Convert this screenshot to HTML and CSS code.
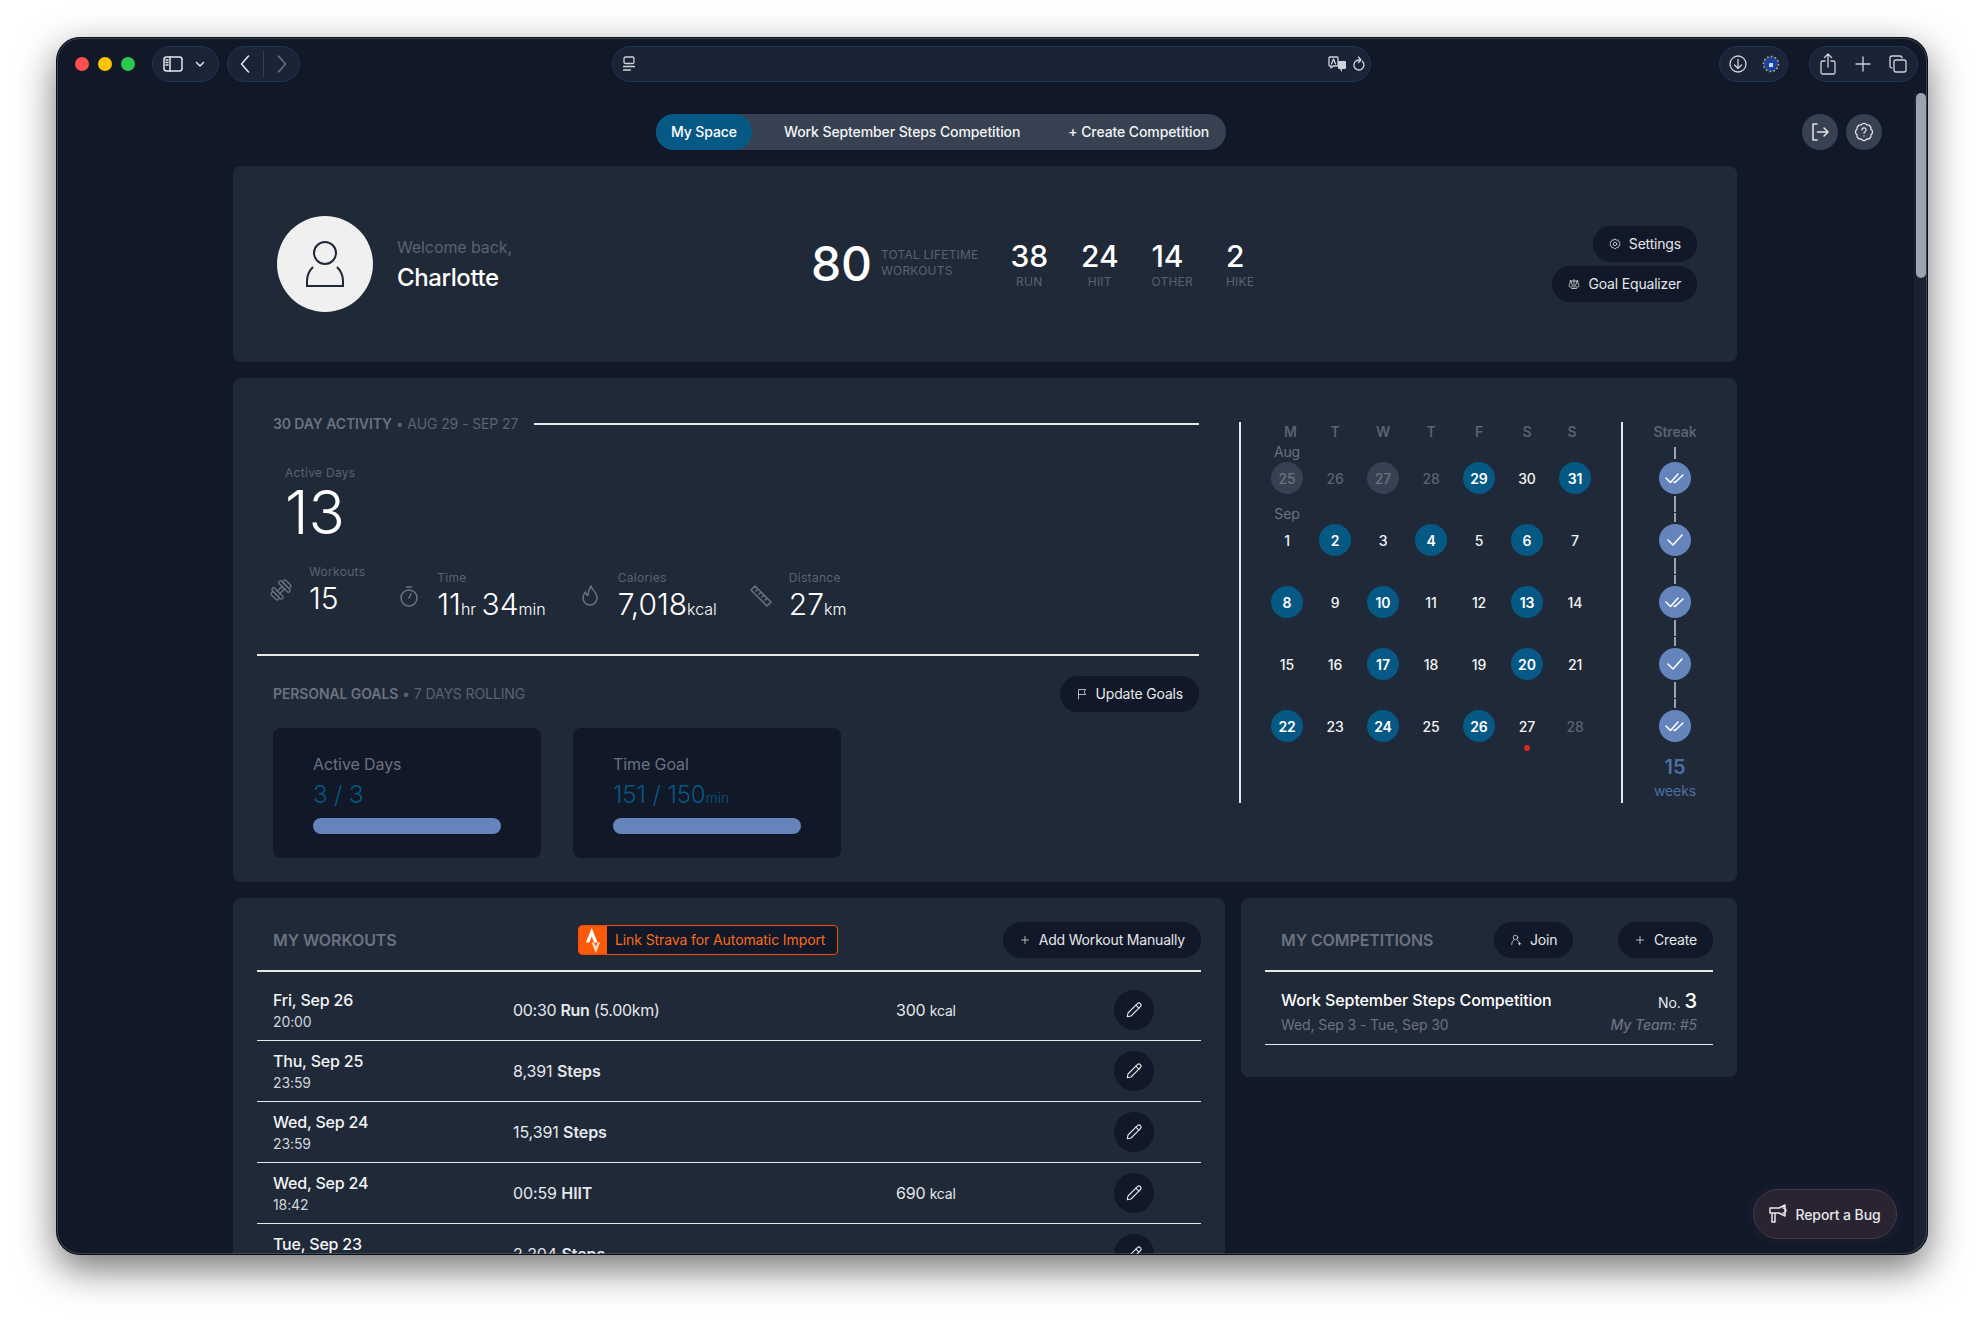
FILE: index.html
```html
<!DOCTYPE html>
<html lang="en">
<head>
<meta charset="utf-8">
<title>My Space</title>
<link rel="stylesheet" href="styles.css">
</head>
<body>
<div class="window">
  <header class="toolbar">
    <div class="lights"><span class="light red"></span><span class="light yellow"></span><span class="light green"></span></div>
    <div class="pill side">
      <svg width="20" height="16" viewBox="0 0 20 16" class="tb"><rect x="1" y="1" width="18" height="14" rx="2.5"/><path d="M7 1v14M3 4h2M3 6.5h2M3 9h2"/></svg>
      <svg width="10" height="7" viewBox="0 0 10 7" class="tb"><path d="M1.5 1.5 5 5l3.500-3.500"/></svg>
    </div>
    <div class="pill nav-pill">
      <svg width="10" height="18" viewBox="0 0 10 18" class="tb"><path d="M8.500 1 1.500 9l7 8"/></svg>
      <span class="nav-sep"></span>
      <svg width="10" height="18" viewBox="0 0 10 18" class="tb dim"><path d="M1.500 1l7 8-7 8"/></svg>
    </div>
    <div class="pill address">
      <svg width="12" height="16" viewBox="0 0 12 16" class="tb thin"><rect x="1" y="1" width="10" height="6.500" rx="1.500"/><path d="M.5 10.500h11M.5 14h7"/></svg>
      <span class="address-end">
        <svg width="19" height="16" viewBox="0 0 19 16" class="tb thin"><path d="M2 1h7a1 1 0 0 1 1 1v7a1 1 0 0 1-1 1H5l-2 2v-2H2a1 1 0 0 1-1-1V2a1 1 0 0 1 1-1z"/><path d="M3.500 8l2-5 2 5"/><rect class="solid" x="10" y="5" width="8" height="8" rx="1"/><path class="solid" d="M14 13v3l-2-3z"/></svg>
        <svg width="12" height="16" viewBox="0 0 12 16" class="tb thin"><path d="M9.500 5.500a5 5 0 1 1-3.500-1.500H7M5.500 1 8 4 5.500 6.500"/></svg>
      </span>
    </div>
    <div class="pill ext">
      <svg width="18" height="18" viewBox="0 0 18 18" class="tb thin"><circle cx="9" cy="9" r="8"/><path d="M9 4.500v9M5.500 10 9 13.500l3.500-3.500"/></svg>
      <svg width="18" height="18" viewBox="0 0 18 18"><circle cx="9" cy="9" r="8" fill="#1d3f9e"/><circle cx="9" cy="9" r="7.500" fill="none" stroke="#d8b92a" stroke-width="1.600" stroke-dasharray="1.400 2.500"/><rect x="7" y="8" width="4" height="4" rx=".6" fill="#c9d4f0"/></svg>
    </div>
    <div class="pill actions">
      <svg width="16" height="22" viewBox="0 0 16 22" class="tb thin"><path d="M5 8H2.500A1.500 1.500 0 0 0 1 9.500v10A1.500 1.500 0 0 0 2.500 21h11a1.500 1.500 0 0 0 1.500-1.500v-10A1.500 1.500 0 0 0 13.500 8H11M8 14V1M4.500 4.500 8 1l3.500 3.500"/></svg>
      <svg width="16" height="16" viewBox="0 0 16 16" class="tb thin"><path d="M8 1v14M1 8h14"/></svg>
      <svg width="18" height="18" viewBox="0 0 18 18" class="tb thin"><rect x="5" y="5" width="12" height="12" rx="2"/><path d="M3 13a2 2 0 0 1-2-2V3a2 2 0 0 1 2-2h8a2 2 0 0 1 2 2"/></svg>
    </div>
  </header>

  <div class="viewport">
    <main class="main">
      <div class="topnav">
        <nav class="tabs">
          <a class="tab active">My Space</a>
          <a class="tab second">Work September Steps Competition</a>
          <a class="tab third">+ Create Competition</a>
        </nav>
        <div class="round-btns">
          <button class="round"><svg width="20" height="20" viewBox="0 0 20 20" class="ico"><path d="M7 2H3v16h4M7.500 10H18M14 6l4 4-4 4"/></svg></button>
          <button class="round"><svg width="20" height="20" viewBox="0 0 24 24" class="ico"><path d="M15.440 3.700A4 4 0 0 1 20.300 8.560 4 4 0 0 1 20.300 15.440 4 4 0 0 1 15.440 20.300 4 4 0 0 1 8.560 20.300 4 4 0 0 1 3.700 15.440 4 4 0 0 1 3.700 8.560 4 4 0 0 1 8.560 3.700 4 4 0 0 1 15.440 3.700z"/><path d="M9.500 9.500a2.500 2.500 0 1 1 3.800 2.100c-.8.500-1.300 1-1.300 1.900M12 16.500v.3"/></svg></button>
        </div>
      </div>

      <section class="card profile">
        <div class="who">
          <div class="avatar"><svg width="40" height="60" viewBox="0 -2 40 60" class="avatar-ico"><ellipse cx="20" cy="17" rx="11" ry="11"/><path d="M8 31C4 35 2 40 2 45v5h36v-5c0-5-2-10-6-14"/></svg></div>
          <div class="greet">
            <div class="welcome">Welcome back,</div>
            <div class="name">Charlotte</div>
          </div>
        </div>
        <div class="stats">
          <div class="total">80</div>
          <div class="total-label">TOTAL LIFETIME<br>WORKOUTS</div>
          <div class="stat center"><b>38</b><span>RUN</span></div>
          <div class="stat center"><b>24</b><span>HIIT</span></div>
          <div class="stat"><b>14</b><span>OTHER</span></div>
          <div class="stat"><b>2</b><span>HIKE</span></div>
        </div>
        <div class="profile-btns">
          <button class="btn"><svg width="12" height="12" viewBox="0 0 24 24" class="ico"><path d="M12 2l2.500 2.300 3.300-.6 1.100 3.200 3.100 1.500L21 11.500l1 3-3 1.700-.8 3.300-3.400-.1L12 22l-2.800-2.600-3.400.1-.8-3.300-3-1.700 1-3-1-3.100 3.100-1.500 1.100-3.200 3.300.6z"/><circle cx="12" cy="12" r="3.500"/></svg>Settings</button>
          <button class="btn"><svg width="12" height="12" viewBox="0 0 24 24" class="ico"><path d="M12 3v18M7 21h10M4 6h16M5.500 6 2 15a3.500 3.500 0 0 0 7 0L5.500 6zM18.500 6 15 15a3.500 3.500 0 0 0 7 0l-3.500-9z"/></svg>Goal Equalizer</button>
        </div>
      </section>

      <section class="card activity">
        <div class="act-left">
          <div class="sec-head">
            <div class="sec-title"><b>30 DAY ACTIVITY</b> • AUG 29 - SEP 27</div>
            <span class="rule"></span>
          </div>
          <div class="hero">
            <div class="small-label">Active Days</div>
            <div class="hero-num">13</div>
          </div>
          <div class="metrics">
            <div class="metric">
              <svg width="24" height="24" viewBox="2 2 20 20" class="ico gray thin"><g transform="rotate(-45 12 12)"><path d="M9 10.500h6M9 13.500h6"/><rect x="6.500" y="6" width="2.800" height="12" rx="1.300"/><rect x="14.700" y="6" width="2.800" height="12" rx="1.300"/><rect x="3.500" y="8" width="3" height="8" rx="1.300"/><rect x="17.500" y="8" width="3" height="8" rx="1.300"/></g></svg>
              <div><div class="small-label">Workouts</div><div class="val">15</div></div>
            </div>
            <div class="metric low">
              <svg width="24" height="24" viewBox="0 0 24 24" class="ico gray"><circle cx="12" cy="14" r="8"/><path d="M12 14l2-4M9.500 3h5"/></svg>
              <div><div class="small-label">Time</div><div class="val">11<small>hr</small> 34<small>min</small></div></div>
            </div>
            <div class="metric low">
              <svg width="24" height="24" viewBox="0 0 24 24" class="ico gray"><path d="M13 2c.5 3.500 6 6 6 12a7 7 0 0 1-14 0c0-2.500 1-4.500 2.500-6 .3 2 1 3 2.500 3.500C10 8 11 5 13 2z"/></svg>
              <div><div class="small-label">Calories</div><div class="val">7,018<small>kcal</small></div></div>
            </div>
            <div class="metric low">
              <svg width="24" height="24" viewBox="0 0 24 24" class="ico gray"><path d="M6 2 22 18l-4 4L2 6zM7 7l2-2M10 10l2-2M13 13l2-2M16 16l2-2"/></svg>
              <div><div class="small-label">Distance</div><div class="val">27<small>km</small></div></div>
            </div>
          </div>
          <div class="rule-full"></div>
          <div class="goal-head">
            <div class="sec-title"><b>PERSONAL GOALS</b> • 7 DAYS ROLLING</div>
            <button class="btn"><svg width="12" height="12" viewBox="0 0 24 24" class="ico"><path d="M5 22V3h14l-2.500 5 2.500 5H5"/></svg>Update Goals</button>
          </div>
          <div class="goals">
            <div class="goal">
              <div class="goal-label">Active Days</div>
              <div class="goal-val">3 / 3</div>
              <div class="bar"></div>
            </div>
            <div class="goal">
              <div class="goal-label">Time Goal</div>
              <div class="goal-val">151 / 150<small>min</small></div>
              <div class="bar"></div>
            </div>
          </div>
        </div>

        <div class="calendar">
          <div class="cal-head"><span>M</span><span>T</span><span>W</span><span>T</span><span>F</span><span>S</span><span>S</span></div>
          <div class="cal-grid">
            <div class="cell"><em>Aug</em><span class="d past">25</span></div>
            <div class="cell"><span class="d muted">26</span></div>
            <div class="cell"><span class="d past">27</span></div>
            <div class="cell"><span class="d muted">28</span></div>
            <div class="cell"><span class="d on">29</span></div>
            <div class="cell"><span class="d">30</span></div>
            <div class="cell"><span class="d on">31</span></div>
            <div class="cell"><em>Sep</em><span class="d">1</span></div>
            <div class="cell"><span class="d on">2</span></div>
            <div class="cell"><span class="d">3</span></div>
            <div class="cell"><span class="d on">4</span></div>
            <div class="cell"><span class="d">5</span></div>
            <div class="cell"><span class="d on">6</span></div>
            <div class="cell"><span class="d">7</span></div>
            <div class="cell"><span class="d on">8</span></div>
            <div class="cell"><span class="d">9</span></div>
            <div class="cell"><span class="d on">10</span></div>
            <div class="cell"><span class="d">11</span></div>
            <div class="cell"><span class="d">12</span></div>
            <div class="cell"><span class="d on">13</span></div>
            <div class="cell"><span class="d">14</span></div>
            <div class="cell"><span class="d">15</span></div>
            <div class="cell"><span class="d">16</span></div>
            <div class="cell"><span class="d on">17</span></div>
            <div class="cell"><span class="d">18</span></div>
            <div class="cell"><span class="d">19</span></div>
            <div class="cell"><span class="d on">20</span></div>
            <div class="cell"><span class="d">21</span></div>
            <div class="cell"><span class="d on">22</span></div>
            <div class="cell"><span class="d">23</span></div>
            <div class="cell"><span class="d on">24</span></div>
            <div class="cell"><span class="d">25</span></div>
            <div class="cell"><span class="d on">26</span></div>
            <div class="cell"><span class="d today">27</span></div>
            <div class="cell"><span class="d muted">28</span></div>
          </div>
        </div>

        <div class="streak">
          <div class="streak-title">Streak</div>
          <span class="stub"></span>
          <span class="wk"><svg width="20" height="12" viewBox="0 0 20 12" class="chk"><path d="M1 6l4.500 4.500L13 2M9 10l1 .5L18 3"/></svg></span>
          <span class="link"></span>
          <span class="wk"><svg width="18" height="14" viewBox="0 0 18 14" class="chk"><path d="M2 7l5 5L16 2"/></svg></span>
          <span class="link"></span>
          <span class="wk"><svg width="20" height="12" viewBox="0 0 20 12" class="chk"><path d="M1 6l4.500 4.500L13 2M9 10l1 .5L18 3"/></svg></span>
          <span class="link"></span>
          <span class="wk"><svg width="18" height="14" viewBox="0 0 18 14" class="chk"><path d="M2 7l5 5L16 2"/></svg></span>
          <span class="link"></span>
          <span class="wk"><svg width="20" height="12" viewBox="0 0 20 12" class="chk"><path d="M1 6l4.500 4.500L13 2M9 10l1 .5L18 3"/></svg></span>
          <div class="streak-num">15</div>
          <div class="streak-unit">weeks</div>
        </div>
      </section>

      <div class="lower">
        <section class="card workouts">
          <div class="panel-head">
            <h2 class="panel-title wide">MY WORKOUTS</h2>
            <a class="strava">
              <span class="strava-ico"><svg width="20" height="25" viewBox="0 0 24 24" preserveAspectRatio="none"><path fill="#ffd9c7" d="M15.387 17.944l-2.089-4.116h-3.065L15.387 24l5.150-10.172h-3.066"/><path fill="#fff" d="M10.463 0l-7 13.828h4.169l2.831-5.599 2.836 5.599h4.172z"/></svg></span>
              <span class="strava-text">Link Strava for Automatic Import</span>
            </a>
            <button class="btn push"><svg width="12" height="12" viewBox="0 0 24 24" class="ico"><path d="M12 5v14M5 12h14"/></svg>Add Workout Manually</button>
          </div>
          <div class="row first">
            <div class="when"><b>Fri, Sep 26</b><span>20:00</span></div>
            <div class="what tight">00:30 <b>Run</b> (5.00km)</div>
            <div class="kcal">300 <small>kcal</small></div>
            <button class="edit"><svg width="18" height="18" viewBox="0 0 24 24" class="ico"><path d="M16.500 3.500a2.800 2.800 0 0 1 4 4L8 20l-5 1 1-5z"/><path d="M14.500 5.500l4 4"/></svg></button>
          </div>
          <div class="row">
            <div class="when"><b>Thu, Sep 25</b><span>23:59</span></div>
            <div class="what">8,391 <b>Steps</b></div>
            <div class="kcal"></div>
            <button class="edit"><svg width="18" height="18" viewBox="0 0 24 24" class="ico"><path d="M16.500 3.500a2.800 2.800 0 0 1 4 4L8 20l-5 1 1-5z"/><path d="M14.500 5.500l4 4"/></svg></button>
          </div>
          <div class="row">
            <div class="when"><b>Wed, Sep 24</b><span>23:59</span></div>
            <div class="what">15,391 <b>Steps</b></div>
            <div class="kcal"></div>
            <button class="edit"><svg width="18" height="18" viewBox="0 0 24 24" class="ico"><path d="M16.500 3.500a2.800 2.800 0 0 1 4 4L8 20l-5 1 1-5z"/><path d="M14.500 5.500l4 4"/></svg></button>
          </div>
          <div class="row">
            <div class="when"><b>Wed, Sep 24</b><span>18:42</span></div>
            <div class="what">00:59 <b>HIIT</b></div>
            <div class="kcal">690 <small>kcal</small></div>
            <button class="edit"><svg width="18" height="18" viewBox="0 0 24 24" class="ico"><path d="M16.500 3.500a2.800 2.800 0 0 1 4 4L8 20l-5 1 1-5z"/><path d="M14.500 5.500l4 4"/></svg></button>
          </div>
          <div class="row">
            <div class="when"><b>Tue, Sep 23</b><span>23:59</span></div>
            <div class="what">2,204 <b>Steps</b></div>
            <div class="kcal"></div>
            <button class="edit"><svg width="18" height="18" viewBox="0 0 24 24" class="ico"><path d="M16.500 3.500a2.800 2.800 0 0 1 4 4L8 20l-5 1 1-5z"/><path d="M14.500 5.500l4 4"/></svg></button>
          </div>
        </section>

        <section class="card comps">
          <div class="panel-head">
            <h2 class="panel-title comp-title">MY COMPETITIONS</h2>
            <button class="btn"><svg width="12" height="12" viewBox="0 0 24 24" class="ico"><circle cx="11" cy="7" r="4.500"/><path d="M3.500 21c0-5 2-8 4-9M14.500 12c1.500.7 2.500 2 3 4M19 17v5M16.500 19.500h5"/></svg>Join</button>
            <button class="btn push"><svg width="12" height="12" viewBox="0 0 24 24" class="ico"><path d="M12 5v14M5 12h14"/></svg>Create</button>
          </div>
          <div class="comp">
            <div class="comp-main">
              <div class="comp-name">Work September Steps Competition</div>
              <div class="comp-date">Wed, Sep 3 - Tue, Sep 30</div>
            </div>
            <div class="comp-side">
              <div class="comp-rank">No. <b>3</b></div>
              <div class="comp-team"><b>My Team:</b> #5</div>
            </div>
          </div>
        </section>
      </div>
    </main>
    <aside class="scrollbar"><span class="thumb"></span></aside>
  </div>

  <button class="bug"><svg width="18" height="20" viewBox="0 0 18 20" class="ico"><path d="M1 4h9l6-3v11l-6-3H1zM3 9v9h3V9M14 4a3 3 0 0 1 3 2.500 3 3 0 0 1-3 2.500" /></svg>Report a Bug</button>
</div>
</body>
</html>
```
FILE: styles.css
```css
* { box-sizing: border-box; }
html, body { margin: 0; height: 100%; }
body {
  position: relative;
  width: 1984px;
  height: 1329px;
  padding: 37px 56px 0;
  background: #fff;
  font-family: "Inter", "Liberation Sans", sans-serif;
  letter-spacing: -.1px;
  color: #fff;
  overflow: hidden;
}
body::before {
  content: "";
  position: absolute;
  left: 56px; top: 37px;
  width: 1872px; height: 1218px;
  border-radius: 24px;
  box-shadow: 0 14px 38px rgba(0,0,0,.55);
}
button { font: inherit; letter-spacing: inherit; color: inherit; border: 0; padding: 0; background: none; }
h2 { margin: 0; }

.window {
  position: relative;
  width: 1872px;
  height: 1218px;
  background: #111827;
  border-radius: 24px;
  overflow: hidden;
  display: flex;
  flex-direction: column;
}
.window::after {
  content: "";
  position: absolute;
  inset: 0;
  border-radius: 24px;
  pointer-events: none;
  box-shadow: inset 0 0 0 1px #0b0d12, inset 0 0 0 2px rgba(130,140,155,.35);
}

/* browser toolbar */
.toolbar {
  height: 56px;
  flex: none;
  display: flex;
  align-items: flex-start;
  padding: 9px 10px 0 19px;
}
.lights { display: flex; gap: 9px; height: 36px; align-items: center; margin-right: 17px; }
.light { width: 14px; height: 14px; border-radius: 50%; }
.red { background: #ff4f52; }
.yellow { background: #fdc400; }
.green { background: #2cc84d; }
.pill {
  height: 36px;
  border: 1px solid #22335a;
  background: #1a2436;
  border-radius: 18px;
  display: flex;
  align-items: center;
  flex: none;
}
.tb { fill: none; stroke: #e5e7eb; stroke-width: 1.500; stroke-linecap: round; stroke-linejoin: round; flex: none; }
.tb.thin { stroke-width: 1.300; stroke: #cfd3da; }
.tb.dim { stroke: #6b7280; }
.tb .solid { fill: #cfd3da; stroke: none; }
.side { width: 67px; padding-left: 10px; gap: 12px; margin-right: 8px; }
.nav-pill { width: 73px; padding-left: 12px; margin-right: 312px; }
.nav-sep { width: 1px; height: 26px; background: #374151; margin: 0 13px; }
.address { width: 759px; padding: 0 5px 0 10px; justify-content: space-between; margin-right: 348px; }
.address-end { display: flex; align-items: center; gap: 6px; }
.ext { width: 69px; justify-content: space-between; padding: 0 7px 0 9px; margin-right: 21px; }
.actions { width: 109px; justify-content: space-between; padding: 0 10px 0 10px; }

/* layout */
.viewport { flex: 1; min-height: 0; display: flex; }
.main { flex: 1; min-width: 0; padding: 21px 177px 0; overflow: hidden; }
.scrollbar { flex: none; width: 14px; background: #1a2230; padding: 0 2px; }
.thumb { display: block; width: 10px; height: 185px; background: #9ca3af; border-radius: 5px; }

.topnav { display: flex; height: 36px; margin-bottom: 16px; margin-right: -145px; }
.tabs { display: flex; margin-left: 423px; height: 36px; background: #374151; border-radius: 18px; font-size: 14px; font-weight: 500; }
.tab { display: flex; align-items: center; padding: 0 15px 1px; border-radius: 18px; color: #f3f4f6; }
.tab.active { background: #075985; color: #fff; }
.tab.second { margin-left: 17px; }
.tab.third { margin-left: 18px; padding-right: 17px; }
.round-btns { margin-left: auto; display: flex; gap: 8px; }
.round { width: 36px; height: 36px; border-radius: 50%; background: #374151; display: flex; align-items: center; justify-content: center; }
.ico { fill: none; stroke: #e5e7eb; stroke-width: 1.500; stroke-linecap: round; stroke-linejoin: round; flex: none; }
.ico.gray { stroke: #6b7280; }
.ico.thin { stroke-width: 1.100; }

.card { background: #1f2937; border-radius: 8px; }

/* profile */
.profile { height: 196px; display: grid; grid-template-columns: 534px auto 1fr; align-items: center; padding: 0 40px 0 44px; margin-bottom: 16px; }
.who { display: flex; align-items: center; gap: 24px; }
.avatar { width: 96px; height: 96px; border-radius: 50%; background: #f0f0f1; display: flex; align-items: center; justify-content: center; }
.avatar-ico { fill: none; stroke: #1f2937; stroke-width: 2; }
.welcome { font-size: 16px; line-height: 24px; color: #5a6371; }
.name { font-size: 24px; line-height: 32px; font-weight: 500; margin-top: 3px; letter-spacing: -.4px; }
.stats { display: flex; align-items: center; }
.total { font-size: 48px; line-height: 48px; font-weight: 500; margin-right: 9px; }
.total-label { font-size: 12px; line-height: 16px; color: #5a6371; letter-spacing: .2px; margin-right: 32px; margin-top: -2px; }
.stat { display: flex; flex-direction: column; margin-right: 33px; }
.stat.center { align-items: center; }
.stat b { font-size: 30px; line-height: 36px; font-weight: 500; }
.stat span { font-size: 12px; line-height: 16px; color: #5a6371; letter-spacing: .2px; }
.profile-btns { display: flex; flex-direction: column; align-items: flex-end; gap: 4px; }
.btn { height: 36px; padding: 0 16px 1px; border-radius: 18px; background: #111827; display: inline-flex; align-items: center; gap: 8px; font-size: 14px; letter-spacing: -.18px; color: #e5e7eb; white-space: nowrap; flex: none; }

/* activity */
.activity { height: 504px; display: flex; align-items: flex-start; padding: 36px 0 0 24px; margin-bottom: 16px; }
.act-left { width: 942px; flex: none; }
.sec-head { display: flex; align-items: center; height: 20px; padding-left: 16px; gap: 16px; }
.sec-title { font-size: 14px; line-height: 20px; color: #5a6371; }
.sec-title b { font-weight: 600; color: #6b7280; }
.rule { flex: 1; height: 2px; background: #e5e7eb; }
.hero { margin-top: 31px; padding-left: 28px; }
.small-label { font-size: 12px; line-height: 16px; color: #5a6371; letter-spacing: .3px; }
.hero-num { font-size: 60px; line-height: 60px; font-weight: 300; padding-top: 1px; letter-spacing: 0; }
.metrics { display: flex; gap: 32px; margin-top: 22px; padding-left: 12px; align-items: flex-start; }
.metric { display: flex; align-items: center; gap: 16px; }
.metric.low { margin-top: 6px; }
.val { font-size: 30px; line-height: 36px; font-weight: 300; white-space: nowrap; letter-spacing: 0; word-spacing: -3px; }
.val small { font-size: 16px; line-height: 1; font-weight: 300; }
.rule-full { height: 2px; background: #e5e7eb; margin-top: 32px; }
.goal-head { display: flex; justify-content: space-between; align-items: center; padding-left: 16px; margin-top: 20px; }
.goals { display: flex; gap: 32px; margin: 16px 0 0 16px; }
.goal { width: 268px; height: 130px; background: #111827; border-radius: 8px; padding: 24px 40px; }
.goal-label { font-size: 16px; line-height: 24px; color: #6b7280; }
.goal-val { font-size: 24px; line-height: 32px; font-weight: 300; color: #075985; margin-top: 3px; }
.goal-val small { font-size: 14px; line-height: 1; }
.bar { height: 16px; border-radius: 8px; background: #6484bb; margin-top: 7px; }

/* calendar */
.calendar { flex: none; margin: 8px 0 0 40px; height: 381px; width: 384px; border-left: 2px solid #e5e7eb; border-right: 2px solid #e5e7eb; padding-left: 22px; }
.cal-head { display: grid; grid-template-columns: repeat(7, 48px); height: 20px; font-size: 14px; line-height: 20px; font-weight: 600; color: #5a6371; text-align: center; }
.cal-head span:first-child { padding-left: 7px; }
.cal-head span:last-child { padding-right: 6px; }
.cal-grid { display: grid; grid-template-columns: repeat(7, 48px); grid-auto-rows: 52px; row-gap: 10px; }
.cell { display: flex; flex-direction: column; justify-content: flex-end; align-items: center; position: relative; }
.cell em { font-style: normal; font-size: 14px; line-height: 20px; color: #6b7280; }
.d { width: 32px; height: 32px; border-radius: 50%; display: flex; align-items: center; justify-content: center; font-size: 14px; font-weight: 500; color: #f3f4f6; }
.d.on { background: #075985; color: #fff; font-weight: 600; }
.d.muted { color: #5a6371; }
.d.past { background: #374151; color: #6b7280; }
.d.today::after { content: ""; position: absolute; left: 21px; bottom: -9px; width: 6px; height: 6px; border-radius: 50%; background: #dc2626; }

/* streak */
.streak { flex: none; width: 104px; margin-top: 8px; display: flex; flex-direction: column; align-items: center; }
.streak-title { font-size: 14px; line-height: 20px; font-weight: 600; color: #5a6371; }
.stub { width: 2px; height: 12px; margin: 5px 0 3px; background: #9ca3af; }
.wk { width: 32px; height: 32px; border-radius: 50%; background: #6484bb; display: flex; align-items: center; justify-content: center; }
.chk { fill: none; stroke: #fff; stroke-width: 1.500; stroke-linecap: round; stroke-linejoin: round; }
.link { width: 2px; height: 26px; margin: 2px 0; background: linear-gradient(#9ca3af 0 16px, #1f2937 16px 17px, #9ca3af 17px); }
.streak-num { font-size: 20px; line-height: 28px; font-weight: 600; color: #4c6fa5; margin-top: 11px; }
.streak-unit { font-size: 14px; line-height: 20px; color: #4c6fa5; }

/* lower panels */
.lower { display: grid; grid-template-columns: 992px 496px; gap: 16px; align-items: start; }
.workouts, .comps { padding: 24px 24px 32px; }
.panel-head { display: flex; align-items: center; padding: 0 0 12px 16px; border-bottom: 2px solid #e5e7eb; height: 50px; }
.panel-title { font-size: 16px; font-weight: 600; color: #6b7280; white-space: nowrap; }
.panel-title.wide { width: 305px; }
.panel-title.comp-title { width: 213px; }
.push { margin-left: auto; }
.strava { display: flex; align-items: stretch; height: 30px; width: 260px; border: 1px solid #fc4c02; border-radius: 4px; background: #111827; overflow: hidden; font-size: 14px; }
.strava-ico { width: 28px; background: #fc5a0a; display: flex; align-items: center; justify-content: center; flex: none; }
.strava-text { color: #fb6a1c; padding-left: 8px; line-height: 27px; white-space: nowrap; }
.row { height: 61px; display: flex; align-items: center; padding-left: 16px; border-bottom: 1px solid #e5e7eb; }
.row.first { height: 69px; padding-top: 8px; }
.when { width: 240px; flex: none; }
.when b { display: block; font-size: 16px; line-height: 22px; font-weight: 500; color: #f3f4f6; letter-spacing: -.2px; }
.when span { display: block; font-size: 14px; line-height: 20px; color: #d1d5db; margin-top: 1px; }
.what { width: 383px; flex: none; font-size: 16px; color: #e5e7eb; }
.what.tight { letter-spacing: -.3px; }
.what b { font-weight: 600; }
.kcal { width: 218px; flex: none; font-size: 16px; color: #e5e7eb; letter-spacing: -.2px; }
.kcal small { font-size: 14px; }
.edit { width: 40px; height: 40px; border-radius: 50%; background: #111827; display: flex; align-items: center; justify-content: center; flex: none; }

.comp { display: flex; justify-content: space-between; padding: 16px 16px 9px; border-bottom: 1px solid #e5e7eb; }
.comp-name { font-size: 16px; line-height: 24px; font-weight: 500; }
.comp-date { font-size: 14px; line-height: 20px; color: #6b7280; margin-top: 3px; }
.comp-side { text-align: right; padding-top: 3px; }
.comp-rank { font-size: 14px; line-height: 24px; color: #e5e7eb; }
.comp-rank b { font-size: 20px; line-height: 1; font-weight: 500; color: #fff; }
.comp-team { font-size: 14px; line-height: 20px; font-style: italic; color: #6b7280; }
.comp-team b { font-weight: 500; }

.bug {
  position: absolute;
  right: 31px;
  bottom: 16px;
  width: 144px;
  height: 50px;
  border-radius: 25px;
  background: #2a2432;
  border: 1px solid #413b49;
  box-shadow: 0 0 0 6px rgba(30,35,50,.35);
  display: flex;
  align-items: center;
  justify-content: center;
  gap: 8px;
  font-size: 14px;
  font-weight: 500;
  color: #e5e7eb;
}
```
